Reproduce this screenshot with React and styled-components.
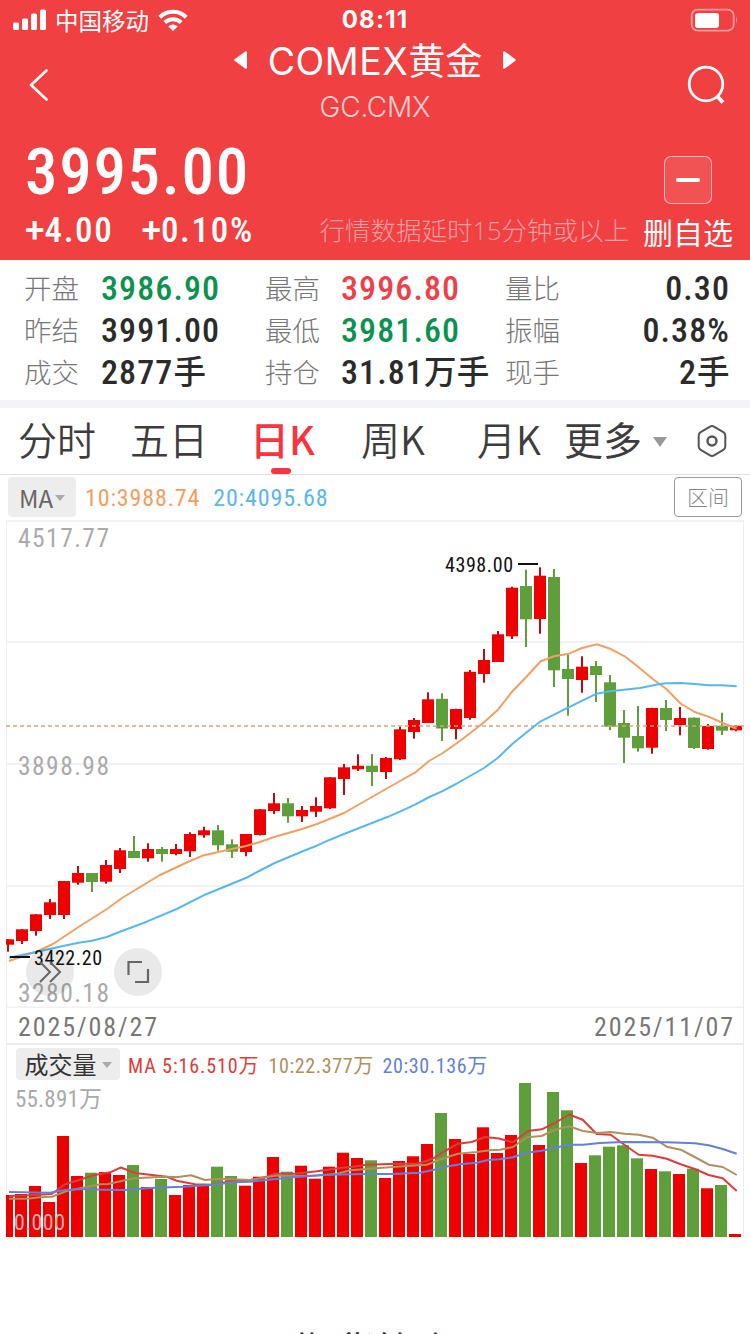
import styled, { createGlobalStyle } from "styled-components";

const RED = "#ee0000";
const GREEN = "#5f9f3b";
const NUMERIC = '"Roboto Condensed", Roboto, "Noto Sans CJK SC", sans-serif';

const GlobalStyle = createGlobalStyle`
  * {
    box-sizing: border-box;
  }
  body {
    margin: 0;
    background: #fff;
    font-family: "Noto Sans CJK SC", sans-serif;
  }
`;

const Page = styled.div`
  width: 750px;
  height: 1334px;
  overflow: hidden;
  display: flex;
  flex-direction: column;
  background: #fff;
`;
const Header = styled.header`
  height: 260px;
  flex: none;
  background: #f04042;
  color: #fff;
  display: flex;
  flex-direction: column;
`;
const StatusBar = styled.div`
  height: 40px;
  display: grid;
  grid-template-columns: 1fr auto 1fr;
  align-items: center;
  padding: 0 11px 0 13px;
`;
const Carrier = styled.div`
  display: flex;
  align-items: center;
  gap: 9px;
  font-size: 23.5px;
  line-height: 38px;
`;
const Clock = styled.div`
  font: 700 24px/40px Inter, sans-serif;
  letter-spacing: 1.2px;
  margin-left: -2px;
`;
const Battery = styled.svg`
  justify-self: end;
`;
const NavBar = styled.div`
  height: 90px;
  display: flex;
  justify-content: space-between;
  padding: 0 24px 0 29px;
`;
const NavIcon = styled.svg`
  margin-top: ${({ $top }) => $top}px;
`;
const TitleBlock = styled.div`
  display: flex;
  flex-direction: column;
  align-items: center;
  margin-left: ${({ $shift }) => $shift || 0}px;
`;
const Title = styled.div`
  display: flex;
  align-items: center;
  gap: 21px;
  height: 40px;
  font: 400 37px/38px "Noto Sans CJK SC", sans-serif;
`;
const Latin = styled.span`
  font-family: Inter, sans-serif;
  font-size: 37.5px;
  letter-spacing: 0.5px;
`;
const Code = styled.div`
  margin-top: 10px;
  font: 300 28px/34px Inter, sans-serif;
  letter-spacing: -0.2px;
  color: #fccfd0;
`;
const Quote = styled.div`
  height: 130px;
  display: grid;
  grid-template-columns: 1fr auto;
  grid-template-rows: 84px 46px;
  padding: 0 17px 0 25px;
`;
const Price = styled.div`
  font: 500 65px/84px ${NUMERIC};
  letter-spacing: 1.7px;
`;
const RemoveButton = styled.button`
  width: 48px;
  height: 48px;
  margin: 26px 21px 0 0;
  padding: 0;
  justify-self: end;
  display: grid;
  place-items: center;
  background: rgba(255, 255, 255, 0.1);
  border: 1px solid rgba(255, 255, 255, 0.6);
  border-radius: 7px;
`;
const Minus = styled.span`
  width: 24px;
  height: 4px;
  border-radius: 2px;
  background: #fff;
`;
const Changes = styled.div`
  display: flex;
  gap: 28px;
  font: 500 35px/34px ${NUMERIC};
  letter-spacing: 1.7px;
`;
const Plus = styled.span`
  font-family: Roboto, sans-serif;
  letter-spacing: 0;
`;
const Delay = styled.div`
  display: flex;
  height: 36px;
  gap: 14px;
  font: 300 25.5px/32px "Open Sans", "Noto Sans CJK SC", sans-serif;
  color: #f89fa0;
`;
const RemoveLabel = styled.span`
  font: 400 30px/34px "Noto Sans CJK SC", sans-serif;
  color: #fff;
`;

const Stats = styled.section`
  height: 140px;
  flex: none;
  padding: 7px 20px 0 24px;
  display: grid;
  grid-template-columns: 77px 164px 76px 164px 76px 1fr;
  grid-auto-rows: 42px;
`;
const StatLabel = styled.span`
  font-size: 27.5px;
  font-weight: 300;
  line-height: 41px;
  color: #777;
`;
const StatValue = styled.span`
  font: 500 34px/42px ${NUMERIC};
  letter-spacing: 1.1px;
  white-space: nowrap;
  color: ${({ $color }) => $color || "#2b2b2b"};
  text-align: ${({ $right }) => ($right ? "right" : "left")};
`;
const Unit = styled.span`
  font-size: 32.5px;
  letter-spacing: 0.4px;
`;
const Divider = styled.div`
  height: 8px;
  flex: none;
  background: #f3f4f8;
`;

const Tabs = styled.nav`
  height: 67px;
  flex: none;
  display: grid;
  grid-template-columns: 112px 120px 111px 116px 87px 133px 1fr;
  padding-left: 18px;
  border-bottom: 1px solid #e0e0e0;
`;
const Tab = styled.div`
  display: flex;
  flex-direction: column;
  width: max-content;
  align-items: center;
  font-size: 39px;
  line-height: 60px;
  font-weight: ${({ $active }) => ($active ? 500 : 350)};
  color: ${({ $active }) => ($active ? "#f7343f" : "#3d3d3d")};
  &::after {
    content: "";
    width: 20px;
    height: 6px;
    margin-right: 3px;
    border-radius: 3px;
    background: ${({ $active }) => ($active ? "#f7343f" : "transparent")};
  }
`;
const MoreTab = styled.div`
  display: flex;
  align-items: center;
  height: 66px;
  gap: 11px;
  font-size: 39px;
  line-height: 66px;
  padding-bottom: 6px;
  color: #3d3d3d;
`;
const SettingsIcon = styled.svg`
  margin: 16px 0 0 -1px;
`;
const Caret = styled.span`
  margin-top: ${({ $top }) => $top || 0}px;
  border: ${({ $size }) => $size}px solid transparent;
  border-top: ${({ $drop }) => $drop}px solid ${({ $color }) => $color || "#aaa"};
  border-bottom: 0;
`;

const IndicatorRow = styled.div`
  height: 45px;
  flex: none;
  display: flex;
  align-items: center;
  padding: 0 8px 1px;
`;
const Pill = styled.button`
  display: flex;
  align-items: center;
  justify-content: center;
  gap: ${({ $gap }) => $gap}px;
  width: ${({ $width }) => $width}px;
  height: ${({ $height }) => $height}px;
  padding: ${({ $drop }) => $drop || 0}px 0 0;
  border: 0;
  border-radius: 4px;
  background: #ededed;
  font: 400 24px/32px "Noto Sans CJK SC", sans-serif;
  color: ${({ $color }) => $color};
`;
const Reading = styled.span`
  margin-left: ${({ $gap }) => $gap}px;
  padding-top: ${({ $drop }) => $drop || 0}px;
  font-family: ${NUMERIC};
  font-size: ${({ $size }) => $size}px;
  letter-spacing: ${({ $spacing }) => $spacing || 0}px;
  white-space: nowrap;
  color: ${({ $color }) => $color};
`;
const RangeButton = styled.button`
  margin-left: auto;
  width: 68px;
  height: 40px;
  padding: 0 0 2px;
  border: 1px solid #999;
  border-radius: 4px;
  background: #fff;
  font: 300 21px "Noto Sans CJK SC", sans-serif;
  color: #888;
`;

const Chart = styled.div`
  position: relative;
  flex: none;
  height: ${({ $height }) => $height}px;
`;
const ChartSvg = styled.svg`
  display: block;
`;
const ChartTools = styled.div`
  position: absolute;
  left: 26px;
  bottom: 12px;
  display: flex;
  gap: 40px;
`;
const RoundTool = styled.button`
  width: 48px;
  height: 48px;
  padding: 0;
  border: 0;
  border-radius: 50%;
  display: grid;
  place-items: center;
  background: rgba(0, 0, 0, 0.085);
`;
const Dates = styled.div`
  height: 37px;
  flex: none;
  margin: 0 6px;
  padding: 1px 8px 0 11px;
  border: solid #ececec;
  border-width: 0 1px 2px;
  display: flex;
  justify-content: space-between;
  font: 400 26px/36px ${NUMERIC};
  letter-spacing: 1.9px;
  color: #777;
`;
const VolumeRow = styled.div`
  height: 35px;
  flex: none;
  margin: 0 6px;
  padding: 3px 0 0 9px;
  border: solid #ececec;
  border-width: 0 1px;
  display: flex;
  align-items: center;
`;
const NextSection = styled.div`
  padding-top: 83px;
  text-align: center;
  font-size: 40px;
  line-height: 58px;
  color: #2b2b2b;
`;

// color, body top, body bottom, high, low
const candles = [
  ["r", 939.3, 944.7, 939, 951.7],
  ["r", 929.3, 941, 929, 944],
  ["r", 914.3, 931, 914, 935.7],
  ["r", 902.3, 915, 899, 919],
  ["r", 881, 915, 881, 919],
  ["r", 873, 882.7, 866, 884.7],
  ["g", 873, 882, 873, 892],
  ["r", 865, 881.7, 860, 883.7],
  ["r", 850.3, 869, 848, 873],
  ["g", 851, 858, 836, 858],
  ["r", 849, 858.3, 843.3, 861.7],
  ["g", 849, 854, 847, 861.7],
  ["r", 849, 854, 844, 855.3],
  ["r", 834, 851.3, 832.3, 857],
  ["r", 830.3, 835.3, 826.7, 837.7],
  ["g", 830.3, 845.3, 825, 850.7],
  ["g", 844.3, 851.7, 839.3, 858],
  ["r", 834, 852, 834, 856.3],
  ["r", 809.3, 835, 809, 835.5],
  ["r", 803.3, 811, 793, 814],
  ["g", 803.3, 816.3, 798, 822.7],
  ["r", 810, 816.3, 806, 822],
  ["r", 806, 811.7, 797.3, 817],
  ["r", 777.3, 808.3, 777, 809],
  ["r", 767.3, 779, 764, 795],
  ["r", 765.7, 769.3, 754.3, 771],
  ["g", 765.7, 772, 754, 786],
  ["r", 758, 772, 757, 779],
  ["r", 729.3, 759.3, 727, 760],
  ["r", 720, 732, 718, 738.7],
  ["r", 699.3, 723, 692.3, 723],
  ["g", 698.8, 728.5, 693.3, 741],
  ["r", 709, 729, 708.7, 739.3],
  ["r", 671.8, 718, 670, 719.7],
  ["r", 660, 674, 649, 682.7],
  ["r", 634.3, 662, 631, 662],
  ["r", 587.7, 636.3, 586.7, 639],
  ["g", 586, 619.3, 569.7, 647],
  ["r", 575.7, 619, 567.3, 633.7],
  ["g", 577, 670.3, 569, 687],
  ["g", 669, 679, 655, 715.7],
  ["r", 666.7, 680, 656.3, 692.7],
  ["g", 666, 675, 661, 702],
  ["g", 682.3, 726.7, 675, 730],
  ["g", 723, 737.7, 710, 763],
  ["g", 736, 748.3, 706, 751.7],
  ["r", 708, 747.7, 707.7, 753.7],
  ["g", 708, 720, 700, 731],
  ["r", 718, 725, 707, 735.3],
  ["g", 717.7, 748, 717.3, 749],
  ["r", 726, 749, 724, 749.7],
  ["g", 725.7, 730.7, 712.7, 735],
  ["r", 725.7, 730.3, 725.3, 731.3],
];

const volumeTops = [
  1195, 1194, 1186, 1202, 1136, 1176, 1172.7, 1172, 1175, 1165, 1187, 1179,
  1195, 1185, 1185, 1166.7, 1176, 1185.7, 1176.7, 1157, 1171.7, 1165.7, 1178.7,
  1166.7, 1152.7, 1158, 1160.3, 1178, 1161, 1156.3, 1144, 1113, 1139, 1154,
  1127.3, 1153, 1135, 1083, 1145, 1092, 1110.3, 1163, 1155.3, 1146.7, 1145.3,
  1158.3, 1169, 1171.3, 1174, 1168.7, 1188.3, 1185, 1234,
];

const priceMa10 =
  "9,961 38,951 53,944 77,928 107,909 122,898 160,875 190,861 203,855.5 225,850.5 246,846 260,842 275,836.7 303,828.7 317,824 344,813 372,797 400,781 415,772.7 429,761 442,753.5 456,743.7 470,733.2 484,722.3 498,709.7 512,691.7 526,677.3 540.7,661.3 554,656.3 569,653.7 582,648 597,644.3 610,648.7 624.7,656.3 638.7,667.3 652.7,679 666.7,689.3 680.7,703.7 694.7,712 708.7,716.7 722.7,723 736.7,728.7";
const priceMa20 =
  "9,957.7 41.7,950.7 63,946 80,942.5 92,940.7 106.7,937 120,931.7 146.7,921.7 176.7,909 205,894.7 230,884.5 247,877.5 260,870.5 274.7,863 303.3,851 316.7,845.7 330,839.7 344,834 372,823 386.7,817.3 400,811.7 415,804.7 429.3,797 442,791.3 456,784 470,776 484,768 498,757.7 512,744.3 526.7,732.3 540.7,721.3 568,707.7 596.7,693.7 610,691.3 640,688 660,684 666.7,683.3 680.7,683 694.7,684 708.7,685.3 722,685.3 736.7,686.3";
const volumeMa5 =
  "9,1196 35,1195 51.7,1194 65,1184.3 79.3,1180 93.3,1175.3 110,1172.3 121,1167.5 135,1173 166.7,1176.7 176.7,1180.7 195,1184.3 213,1184.7 233,1180.7 250,1180 265,1177.3 275,1173.7 295,1173.7 316.7,1171.3 338,1168.3 353,1166.7 366.7,1164.7 396.7,1163.7 416.7,1163.7 426.7,1161 434,1158 443,1152 458,1143.7 471.7,1142 485,1137 499,1138.5 513,1142.3 528,1131 541.7,1129.3 555,1123 569,1114.5 582.7,1119.7 596.7,1134 610.7,1134.7 624.7,1145 638.7,1154.7 652.7,1155.7 666.7,1158.7 680.7,1164.3 694.7,1169 708.7,1175 722.7,1178.3 736.7,1191";
const volumeMa10 =
  "9,1198.7 27,1198.7 40,1197.3 52,1196.7 66.7,1191 81.7,1188 100,1184.3 108,1184 125,1180.3 135,1178.3 163,1176.7 178,1177 191,1175.2 205,1180 220,1178.7 250,1180 277,1175.5 295,1176 316.7,1175.5 336.7,1174 350,1170.3 383,1167.7 406.7,1166 426.7,1164.7 441.7,1159 458,1153.7 476.7,1152 490,1150.3 500,1149.7 513,1147 527,1137.3 541.7,1136 555,1129.7 569,1126.3 583,1131 596.7,1133 610.7,1132 624.7,1133.7 638.7,1134.7 652.7,1137.7 666.7,1146.7 680.7,1149.7 694.7,1157 708.7,1164.7 722.7,1167 736.7,1175";
const volumeMa20 =
  "9,1192 50,1192.7 65,1190 80,1189 103,1189.7 125,1190 150,1188 183,1186.7 213,1184.7 233,1182.3 250,1181.7 293,1177.3 326.7,1174.7 366.7,1174 393,1174 420,1172.7 433,1170 443,1167.3 460,1164.3 476.7,1162.7 488,1160 500,1159.3 513,1157.3 526.7,1152.7 541.7,1150.7 555,1147.7 569,1144.7 583,1144.7 600,1143 623,1142 666.7,1142.3 694.7,1143.3 708.7,1145.3 722.7,1149 736.7,1153.7";

const stats = [
  { label: "开盘", value: "3986.90", color: "#0b9150" },
  { label: "最高", value: "3996.80", color: "#ee3f4a" },
  { label: "量比", value: "0.30" },
  { label: "昨结", value: "3991.00" },
  { label: "最低", value: "3981.60", color: "#0b9150" },
  { label: "振幅", value: "0.38%" },
  { label: "成交", value: "2877", unit: "手" },
  { label: "持仓", value: "31.81", unit: "万手" },
  { label: "现手", value: "2", unit: "手" },
];

function Line({ points, color }) {
  return (
    <polyline
      points={points}
      fill="none"
      stroke={color}
      strokeWidth="2"
      strokeLinejoin="round"
    />
  );
}

function Label({ x, y, width, size, color, children }) {
  return (
    <text
      x={x}
      y={y}
      textLength={width}
      lengthAdjust="spacing"
      fontSize={size}
      fill={color}
      fontFamily={NUMERIC}
    >
      {children}
    </text>
  );
}

function PriceChart() {
  return (
    <Chart $height={488}>
      <ChartSvg width="750" height="488" viewBox="0 520 750 488">
        <g stroke="#f2f2f2" strokeWidth="2">
          {[521, 642, 764, 886, 1007.5].map((y) => (
            <path key={y} d={`M6 ${y}H744`} />
          ))}
          <path d="M6.5 520V1008M743.5 520V1008" stroke="#ececec" strokeWidth="1" />
        </g>
        <Label x={18} y={547} width={91} size={25.5} color="#aaa">4517.77</Label>
        <Label x={18} y={774.5} width={91} size={25.5} color="#aaa">3898.98</Label>
        <Label x={18} y={1002} width={91} size={25.5} color="#aaa">3280.18</Label>
        <clipPath id="plot">
          <rect x="6" y="520" width="738" height="488" />
        </clipPath>
        <g clipPath="url(#plot)">
          {candles.map(([color, top, bottom, high, low], i) => (
            <g key={i} fill={color === "r" ? RED : GREEN}>
              <rect
                x={7 + i * 14}
                y={high}
                width="2"
                height={low - high}
                fill={color === "r" ? "#b90d12" : GREEN}
              />
              <rect x={2 + i * 14} y={top} width="12" height={bottom - top} />
            </g>
          ))}
        </g>
        <path d="M6 726H744" stroke="#cfa77d" strokeWidth="1.6" strokeDasharray="4 3" />
        <Line points={priceMa10} color="#f0a064" />
        <Line points={priceMa20} color="#57b7ee" />
        <path d="M10 957H30M518 564H538" stroke="#111" strokeWidth="2" />
        <Label x={34} y={965} width={68} size={20} color="#111">3422.20</Label>
        <Label x={445} y={572} width={68} size={20} color="#111">4398.00</Label>
      </ChartSvg>
      <ChartTools>
        <RoundTool>
          <svg width="24" height="24" viewBox="0 0 24 24" fill="none" stroke="#666" strokeWidth="2">
            <path d="M2 2L12 12L2 22M12 2L22 12L12 22" />
          </svg>
        </RoundTool>
        <RoundTool>
          <svg width="24" height="24" viewBox="0 0 24 24" fill="none" stroke="#666" strokeWidth="2.2">
            <path d="M2.5 15V2H16M22 9V22H9" />
          </svg>
        </RoundTool>
      </ChartTools>
    </Chart>
  );
}

function VolumeChart() {
  return (
    <Chart $height={157}>
      <ChartSvg width="750" height="157" viewBox="0 1080 750 157">
        <path d="M6.5 1080V1237M743.5 1080V1237" stroke="#ececec" />
        <Label x={15} y={1107} width={87} size={23} color="#aaa">55.891万</Label>
        <clipPath id="bars">
          <rect x="6" y="1080" width="738" height="157" />
        </clipPath>
        <g clipPath="url(#bars)">
          {volumeTops.map((top, i) => (
            <rect
              key={i}
              x={1 + i * 14}
              y={top}
              width="12"
              height={1237 - top}
              fill={candles[i][0] === "r" ? RED : GREEN}
            />
          ))}
        </g>
        <Line points={volumeMa5} color="#d93e3c" />
        <Line points={volumeMa10} color="#b18f5c" />
        <Line points={volumeMa20} color="#6480d8" />
        <Label x={14} y={1230} width={51} size={22} color="#c9b0ae">0.000</Label>
      </ChartSvg>
    </Chart>
  );
}

export default function App() {
  return (
    <>
      <GlobalStyle />
      <Page>
        <Header>
          <StatusBar>
            <Carrier>
              <svg width="33" height="22" viewBox="0 0 33 22" fill="#fff">
                <rect x="0" y="13.5" width="6" height="7.5" rx="1.5" />
                <rect x="9" y="9.5" width="6" height="11.5" rx="1.5" />
                <rect x="18" y="4.5" width="6" height="16.5" rx="1.5" />
                <rect x="27" y="0.5" width="6" height="20.5" rx="1.5" />
              </svg>
              中国移动
              <svg width="30" height="22" viewBox="0 0 30 22" fill="none" stroke="#fff" strokeWidth="4">
                <path d="M1.8 8.2A19 19 0 0 1 28.2 8.2" />
                <path d="M6.8 13.5A12 12 0 0 1 23.2 13.5" />
                <path d="M15 22L10.4 17.4A6.5 6.5 0 0 1 19.6 17.4Z" fill="#fff" stroke="none" />
              </svg>
            </Carrier>
            <Clock>08:11</Clock>
            <Battery width="49" height="24" viewBox="0 0 49 24">
              <rect x="1.7" y="1.7" width="42" height="21" rx="6" fill="none" stroke="#f79c9d" strokeWidth="1.8" />
              <rect x="5" y="5" width="24" height="15" rx="3" fill="#fff" />
              <path d="M46 8.5Q48 12 46 15.5Z" fill="#f79c9d" />
            </Battery>
          </StatusBar>
          <NavBar>
            <NavIcon $top={29} width="20" height="32" viewBox="0 0 20 32" fill="none" stroke="#fff" strokeWidth="2.6" strokeLinecap="round" strokeLinejoin="round">
              <path d="M17.5 1.5L2 16L17.5 30.5" />
            </NavIcon>
            <TitleBlock $shift={14}>
              <Title>
                <svg width="13" height="18" viewBox="0 0 13 18" fill="#fff">
                  <path d="M0.6 8.2L11.5 0.3Q13 0 13 1.8V16.2Q13 18 11.5 17.7L0.6 9.8Q-0.2 9 0.6 8.2Z" />
                </svg>
                <span>
                  <Latin>COMEX</Latin>黄金
                </span>
                <svg width="13" height="18" viewBox="0 0 13 18" fill="#fff">
                  <path d="M12.4 8.2L1.5 0.3Q0 0 0 1.8V16.2Q0 18 1.5 17.7L12.4 9.8Q13.2 9 12.4 8.2Z" />
                </svg>
              </Title>
              <Code>GC.CMX</Code>
            </TitleBlock>
            <NavIcon $top={25} width="39" height="40" viewBox="0 0 39 40" fill="none" stroke="#fff" strokeWidth="2.8">
              <circle cx="19" cy="19" r="16.8" />
              <path d="M30 31L36 37.5" strokeWidth="4" />
            </NavIcon>
          </NavBar>
          <Quote>
            <Price>3995.00</Price>
            <RemoveButton>
              <Minus />
            </RemoveButton>
            <Changes>
              <span>
                <Plus>+</Plus>4.00
              </span>
              <span>
                <Plus>+</Plus>0.10%
              </span>
            </Changes>
            <Delay>
              行情数据延时15分钟或以上
              <RemoveLabel>删自选</RemoveLabel>
            </Delay>
          </Quote>
        </Header>

        <Stats>
          {stats.map(({ label, value, unit, color }, i) => [
            <StatLabel key={label}>{label}</StatLabel>,
            <StatValue key={label + "v"} $color={color} $right={i % 3 === 2}>
              {value}
              {unit && <Unit>{unit}</Unit>}
            </StatValue>,
          ])}
        </Stats>
        <Divider />

        <Tabs>
          <Tab>分时</Tab>
          <Tab>五日</Tab>
          <Tab $active>日K</Tab>
          <Tab>周K</Tab>
          <Tab>月K</Tab>
          <MoreTab>
            更多
            <Caret $size={7.5} $drop={10} $top={8} $color="#999" />
          </MoreTab>
          <SettingsIcon width="32" height="34" viewBox="0 0 32 34" fill="none" stroke="#555" strokeWidth="2">
            <path d="M14 2.6Q16 1.5 18 2.6L27.3 8.1Q29.3 9.3 29.3 11.4V22.6Q29.3 24.7 27.3 25.9L18 31.4Q16 32.5 14 31.4L4.7 25.9Q2.7 24.7 2.7 22.6V11.4Q2.7 9.3 4.7 8.1Z" />
            <circle cx="16" cy="17" r="4.5" strokeWidth="2.4" />
          </SettingsIcon>
        </Tabs>

        <IndicatorRow>
          <Pill $width={68} $height={40} $gap={2} $drop={2} $color="#666">
            MA
            <Caret $size={5} $drop={6} />
          </Pill>
          <Reading $gap={9} $drop={2} $size={24} $spacing={0.85} $color="#f39d61">10:3988.74</Reading>
          <Reading $gap={13} $drop={2} $size={24} $spacing={0.85} $color="#5ab6ef">20:4095.68</Reading>
          <RangeButton>区间</RangeButton>
        </IndicatorRow>

        <PriceChart />
        <Dates>
          <span>2025/08/27</span>
          <span>2025/11/07</span>
        </Dates>
        <VolumeRow>
          <Pill $width={104} $height={32} $gap={5} $color="#333">
            成交量
            <Caret $size={5} $drop={6} $top={2} />
          </Pill>
          <Reading $gap={8} $size={20} $spacing={0.9} $color="#d93e3c">MA 5:16.510万</Reading>
          <Reading $gap={9} $size={20} $spacing={0.65} $color="#b18f5c">10:22.377万</Reading>
          <Reading $gap={8.5} $size={20} $spacing={0.65} $color="#6480d8">20:30.136万</Reading>
        </VolumeRow>
        <VolumeChart />
        <NextSection>期货简介</NextSection>
      </Page>
    </>
  );
}
